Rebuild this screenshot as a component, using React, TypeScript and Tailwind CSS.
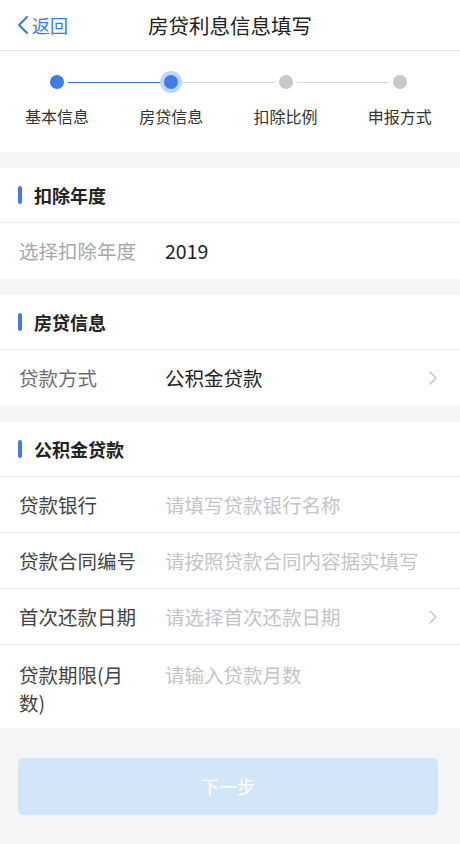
import React from "react";

const font = { fontFamily: '"Noto Sans CJK SC", "Noto Sans", sans-serif' };

function Chevron() {
  return (
    <svg width="10" height="16" viewBox="0 0 10 16" className="ml-auto mr-[22px] self-center">
      <path d="M2 2 L8 8 L2 14" fill="none" stroke="#c8c8cc" strokeWidth="1.6" strokeLinecap="round" strokeLinejoin="round" />
    </svg>
  );
}

function SectionHeader({ title }: { title: string }) {
  return (
    <div className="h-[55px] flex items-center pl-[18px] border-b border-[#ececee]">
      <div className="w-[4px] h-[18px] rounded-full bg-[#3f7de0]" />
      <div className="ml-[12px] text-[18px] font-bold text-[#222]">{title}</div>
    </div>
  );
}

function Row({
  label,
  value,
  placeholder,
  labelColor = "text-[#444]",
  chevron,
  last,
  tall,
}: {
  label: string;
  value?: string;
  placeholder?: string;
  labelColor?: string;
  chevron?: boolean;
  last?: boolean;
  tall?: boolean;
}) {
  return (
    <div className={`flex ${tall ? "h-[83px] items-start pt-[16px]" : "h-[56px] items-center"} pl-[19px] ${last ? "" : "border-b border-[#ececee]"}`}>
      <div className="w-[146px] shrink-0 pr-[20px] text-[19.5px] leading-[28px]">
        <span className={labelColor}>{label}</span>
      </div>
      {value && <div className="text-[19.5px] leading-[28px] text-[#222]">{value}</div>}
      {placeholder && <div className="text-[19.5px] leading-[28px] text-[#c4c4c8] whitespace-nowrap">{placeholder}</div>}
      {chevron && <Chevron />}
    </div>
  );
}

function Step({ label, state, left, right }: { label: string; state: "done" | "active" | "todo"; left: string; right: string }) {
  return (
    <div className="flex flex-col items-center">
      <div className="w-full flex items-center h-[22px]">
        <div className={`flex-1 h-[1px] ${left}`} />
        {state === "active" ? (
          <div className="w-[22px] h-[22px] rounded-full bg-[#bcd7f7] flex items-center justify-center">
            <div className="w-[14px] h-[14px] rounded-full bg-[#3f7de6]" />
          </div>
        ) : (
          <div className={`w-[14px] h-[14px] mx-[4px] rounded-full ${state === "done" ? "bg-[#3f7de6]" : "bg-[#c8c8ca]"}`} />
        )}
        <div className={`flex-1 h-[1px] ${right}`} />
      </div>
      <div className="mt-[12px] text-[16px] leading-[22px] text-[#333] whitespace-nowrap">{label}</div>
    </div>
  );
}

export default function App() {
  return (
    <div className="w-[460px] h-[844px] bg-[#f3f5f7] overflow-hidden" style={font}>
      {/* header */}
      <div className="h-[51px] bg-white grid grid-cols-[1fr_auto_1fr] items-center border-b border-[#e4e4e6]">
        <div className="flex items-center pl-[17px] text-[#3a7bd5] text-[18px]">
          <svg width="12" height="20" viewBox="0 0 12 20" className="mr-[3px]">
            <path d="M10 2 L2 10 L10 18" fill="none" stroke="#3a7bd5" strokeWidth="2" strokeLinecap="round" strokeLinejoin="round" />
          </svg>
          <span>返回</span>
        </div>
        <div className="text-[20.5px] text-[#222]">房贷利息信息填写</div>
        <div />
      </div>

      {/* steps */}
      <div className="bg-white h-[101px] pt-[20px] pr-[3px] grid grid-cols-4">
        <Step label="基本信息" state="done" left="bg-transparent" right="bg-[#3a7bd5]" />
        <Step label="房贷信息" state="active" left="bg-[#3a7bd5]" right="bg-[#d6d6d8]" />
        <Step label="扣除比例" state="todo" left="bg-[#d6d6d8]" right="bg-[#d6d6d8]" />
        <Step label="申报方式" state="todo" left="bg-[#d6d6d8]" right="bg-transparent" />
      </div>

      <div className="flex flex-col gap-[16px] pt-[16px]">
        <div className="bg-white">
          <SectionHeader title="扣除年度" />
          <Row label="选择扣除年度" value="2019" labelColor="text-[#a8a8ac]" last />
        </div>

        <div className="bg-white">
          <SectionHeader title="房贷信息" />
          <Row label="贷款方式" value="公积金贷款" labelColor="text-[#6e6e72]" chevron last />
        </div>

        <div className="bg-white">
          <SectionHeader title="公积金贷款" />
          <Row label="贷款银行" placeholder="请填写贷款银行名称" />
          <Row label="贷款合同编号" placeholder="请按照贷款合同内容据实填写" />
          <Row label="首次还款日期" placeholder="请选择首次还款日期" chevron />
          <Row label="贷款期限(月数)" placeholder="请输入贷款月数" tall last />
        </div>
      </div>

      <div className="pl-[18px] pr-[22px] pt-[30px]">
        <div className="h-[57px] rounded-[5px] bg-[#d3e5f9] flex items-center justify-center text-white text-[18px]">
          下一步
        </div>
      </div>
    </div>
  );
}
